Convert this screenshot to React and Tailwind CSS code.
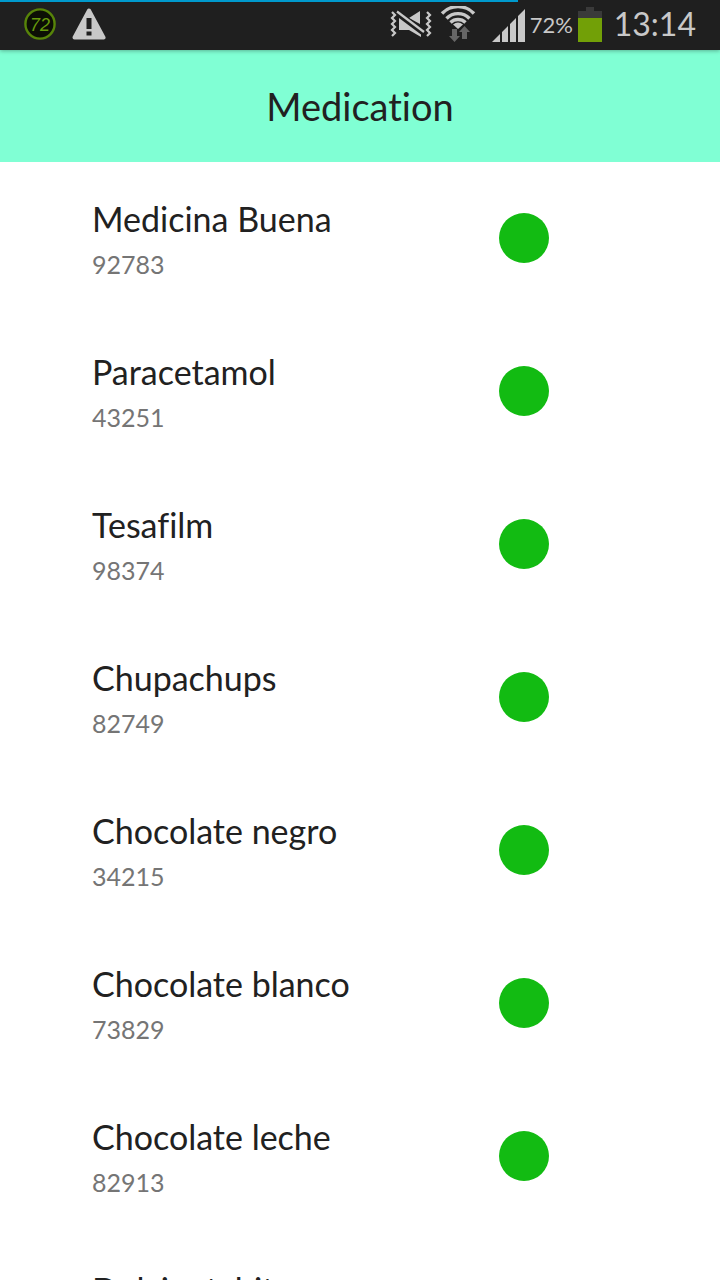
const medications = [
  { name: "Medicina Buena", code: "92783" },
  { name: "Paracetamol", code: "43251" },
  { name: "Tesafilm", code: "98374" },
  { name: "Chupachups", code: "82749" },
  { name: "Chocolate negro", code: "34215" },
  { name: "Chocolate blanco", code: "73829" },
  { name: "Chocolate leche", code: "82913" },
  { name: "Dulcinetabit", code: "" },
];

function BatteryBadge() {
  return (
    <svg className="h-8 w-8" viewBox="0 0 32 32" role="img" aria-label="Battery 72">
      <circle cx="16" cy="16" r="14.6" fill="#0c0f05" stroke="#578409" strokeWidth="2.4" />
      <text x="16" y="22.5" textAnchor="middle" fontFamily="Liberation Sans, sans-serif" fontStyle="italic" fontSize="18" fill="#679b0c">72</text>
    </svg>
  );
}

function WarningIcon() {
  return (
    <svg className="h-8 w-[34px]" viewBox="0 0 34 32" aria-hidden="true">
      <path d="M17 2.500 31.500 29.500H2.500Z" fill="#c8c8c8" stroke="#c8c8c8" strokeWidth="4" strokeLinejoin="round" />
      <path d="M14.5 10h5v11h-5zM14.5 23.500h5v4h-5z" fill="#1f1f1f" />
    </svg>
  );
}

function VibrateIcon() {
  return (
    <svg className="h-9 w-[42px]" viewBox="0 0 42 36" fill="none" aria-hidden="true">
      <path d="M19 12 30 5V18Z" fill="#c8c8c8" />
      <path d="M7 6 34 26" stroke="#1f1f1f" strokeWidth="5" />
      <path d="M7 5.500 34 26" stroke="#c8c8c8" strokeWidth="2.2" />
      <path d="M9 12 31 28.500V31L19 24H9Z" fill="#c8c8c8" />
      <path d="m2 6 3 3-3 3 3 3-3 3 3 3-3 3 3 3-3 3M37 6l3 3-3 3 3 3-3 3 3 3-3 3 3 3-3 3" stroke="#c8c8c8" strokeWidth="2.2" />
    </svg>
  );
}

function WifiIcon() {
  return (
    <svg className="h-9 w-9" viewBox="0 0 36 36" fill="none" aria-hidden="true">
      <path d="M2 7.500A22 22 0 0 1 34 7.500M6.500 12.500A16 16 0 0 1 29.500 12.500M10.500 16.500A11 11 0 0 1 25.500 16.500" stroke="#c8c8c8" strokeWidth="3.4" />
      <path d="M13 18.500Q18 14.500 23 18.500L18 23Z" fill="#c8c8c8" />
      <path d="M12 23h5v7h3l-5.500 6-5.500-6h3zM22 33h5v-7h3l-5.500-6-5.500 6h3z" fill="#666" />
    </svg>
  );
}

function SignalIcon() {
  return (
    <svg className="h-9 w-[34px]" viewBox="0 0 34 36" aria-hidden="true">
      <path d="M0 36 8 28V36zM10 26 16 20V36h-6zM18 18 24 12V36h-6zM26 10 33 3V36h-7z" fill="#c8c8c8" />
    </svg>
  );
}

function BatteryIcon() {
  return (
    <svg className="h-9 w-6" viewBox="0 0 24 36" aria-hidden="true">
      <path d="M8 1h8v4h8v7H0V5h8z" fill="#3a3a3a" />
      <path d="M0 12h24v24H0z" fill="#72a007" />
    </svg>
  );
}

export default function App() {
  return (
    <div className="h-screen overflow-hidden bg-white font-['Lato',sans-serif] text-[#212121] [font-variant-ligatures:none]">
      <div className="relative flex h-[50px] items-center justify-between bg-[#1f1f1f] px-6 pb-0.5 text-[#c8c8c8] shadow-[0_1px_4px_rgba(0,0,0,0.3)]">
        <div className="absolute left-0 top-0 h-0.5 w-[72%] bg-[#0099cc]" />
        <div className="flex items-center gap-4">
          <BatteryBadge />
          <WarningIcon />
        </div>
        <div className="flex items-center">
          <VibrateIcon />
          <div className="ml-2"><WifiIcon /></div>
          <div className="ml-4"><SignalIcon /></div>
          <span className="ml-1 w-12 text-[22px]">72%</span>
          <BatteryIcon />
          <time className="ml-3 text-[32px] leading-none">13:14</time>
        </div>
      </div>
      <header className="flex h-28 items-center justify-center bg-[#80ffd4]">
        <h1 className="text-[38px] leading-none">Medication</h1>
      </header>
      <ul>
        {medications.map((item) => (
          <li key={item.name} className="flex h-[153px] items-center pb-px">
            <div className="flex-1 pl-[92px]">
              <h2 className="text-[34px] leading-[50px]">{item.name}</h2>
              <p className="h-[38px] text-[25px] leading-10 text-[#757575]">{item.code}</p>
            </div>
            <span className="mr-[171px] size-[50px] rounded-full bg-[#12bb12]" />
          </li>
        ))}
      </ul>
    </div>
  );
}
